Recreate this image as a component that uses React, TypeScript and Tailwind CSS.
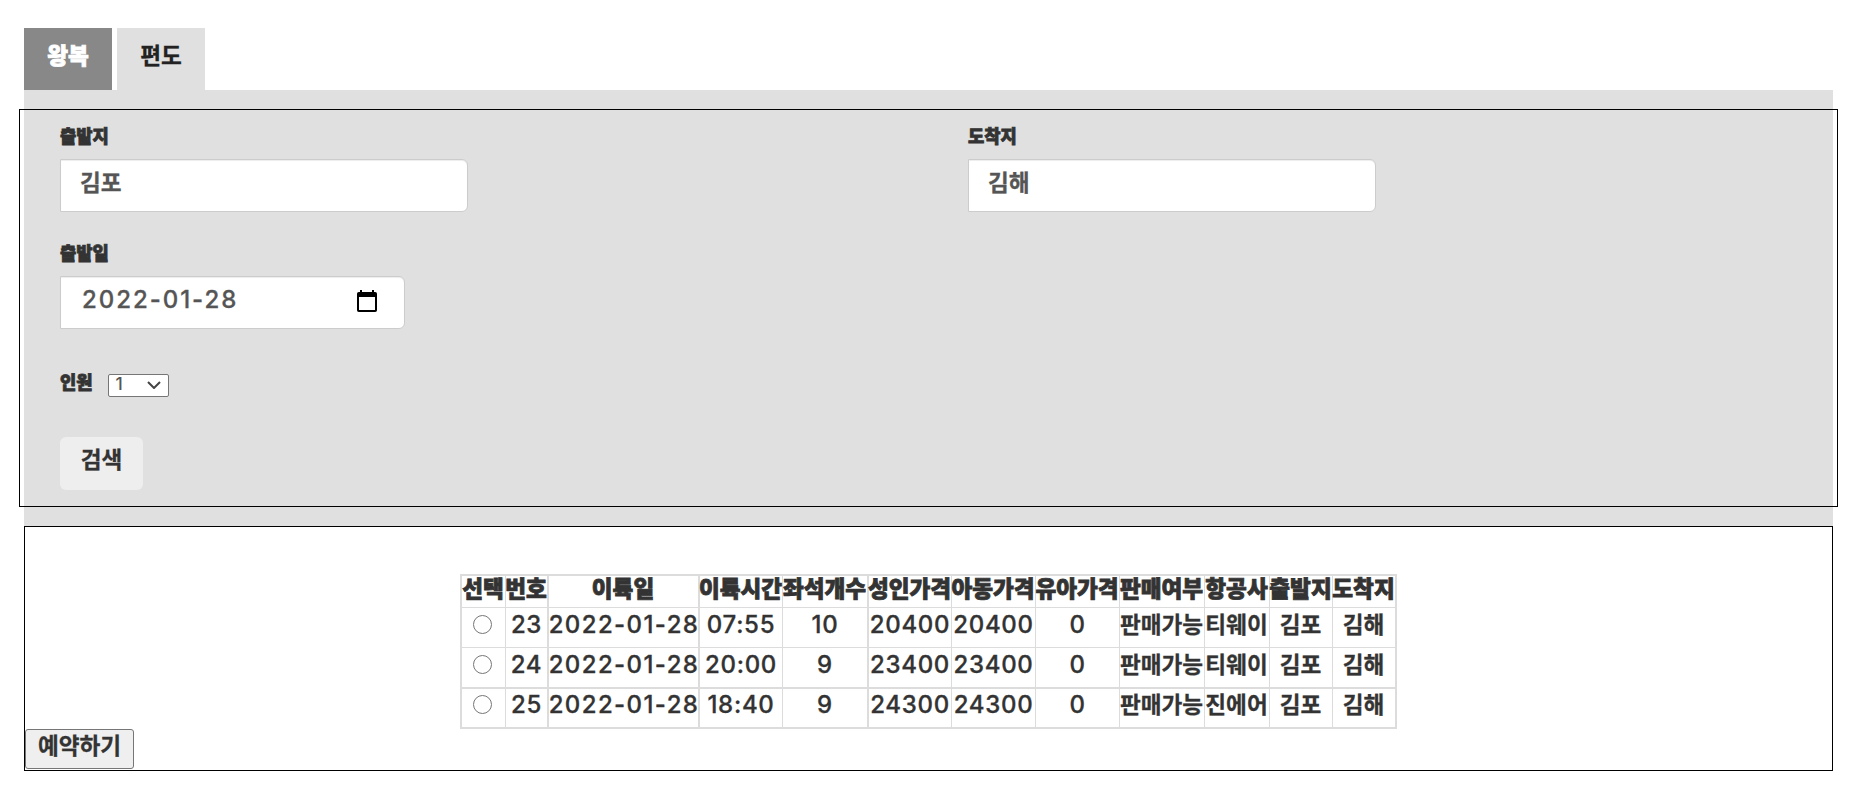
import type { ReactNode } from 'react';

const fontKo = "font-['Noto_Sans_CJK_KR',sans-serif]";
const fontNum = "font-['Inter','Noto_Sans_CJK_KR',sans-serif]";
const heavy = 'font-black [-webkit-text-stroke:0.8px_currentColor]';

const columns = [
  { label: '선택', cell: 'w-[44px] border-r' },
  { label: '번호', cell: 'w-[43px] border-r-2' },
  { label: '이륙일', cell: 'w-[151px] border-r-2' },
  { label: '이륙시간', cell: 'w-[83px] border-r' },
  { label: '좌석개수', cell: 'w-[86px] border-r-2' },
  { label: '성인가격', cell: 'w-[83px] border-r' },
  { label: '아동가격', cell: 'w-[84px] border-r' },
  { label: '유아가격', cell: 'w-[84px] border-r' },
  { label: '판매여부', cell: 'w-[85px] border-r' },
  { label: '항공사', cell: 'w-[65px] border-r' },
  { label: '출발지', cell: 'w-[63px] border-r' },
  { label: '도착지', cell: 'w-[64px] border-r-2' },
];

const flights = [
  { height: 'h-[40px] border-b', values: ['23', '2022-01-28', '07:55', '10', '20400', '20400', '0', '판매가능', '티웨이', '김포', '김해'] },
  { height: 'h-[41px] border-b-2', values: ['24', '2022-01-28', '20:00', '9', '23400', '23400', '0', '판매가능', '티웨이', '김포', '김해'] },
  { height: 'h-[40px] border-b-2', values: ['25', '2022-01-28', '18:40', '9', '24300', '24300', '0', '판매가능', '진에어', '김포', '김해'] },
];

function cellText(value: string) {
  if (value.includes('-')) return `${fontNum} -mx-[4px] pl-[1px] text-[24px] tracking-[1.4px] font-medium [-webkit-text-stroke:0.3px_currentColor]`;
  if (/\d/.test(value)) return `${fontNum} -mx-[4px] text-[24px] tracking-[0.7px] font-medium [-webkit-text-stroke:0.3px_currentColor]`;
  return '-mx-[4px] -mt-px pr-px [-webkit-text-stroke:0.3px_currentColor]';
}

function Label({ children }: { children: ReactNode }) {
  return (
    <label className={`${fontKo} ${heavy} block h-[23px] whitespace-nowrap text-[17.7px] leading-[21px] text-[#333]`}>
      {children}
    </label>
  );
}

function Field({ value, className = '', children }: { value: string; className?: string; children?: ReactNode }) {
  return (
    <div
      className={`flex h-[53px] items-center justify-between rounded-r-[6px] border border-[#ccc] bg-white text-[#555] shadow-[inset_0_1px_1px_rgba(0,0,0,0.075)] [-webkit-text-stroke:0.3px_currentColor] ${className}`}
    >
      <span>{value}</span>
      {children}
    </div>
  );
}

function CalendarIcon() {
  return (
    <svg width="20" height="22" viewBox="0 0 20 22" className="mt-[1px] mr-[27px]">
      <path
        fill="#000"
        fillRule="evenodd"
        d="M3 0h2v2h10V0h2v2h1.2A1.8 1.8 0 0 1 20 3.800V20.200A1.800 1.800 0 0 1 18.200 22H1.800A1.800 1.800 0 0 1 0 20.200V3.800A1.800 1.800 0 0 1 1.800 2H3zM2 7v13h16V7z"
      />
    </svg>
  );
}

export default function App() {
  return (
    <div className={`${fontKo} h-[792px] w-[1855px] bg-white pt-[28px] pl-[24px] text-[22.6px] leading-[30px] font-bold text-[#333]`}>
      <nav className="flex h-[62px] gap-[5px]">
        <button className={`h-[62px] w-[88px] bg-[#888] pb-[8px] text-white ${heavy}`}>왕복</button>
        <button className="h-[62px] w-[88px] bg-[#e0e0e0] pb-[8px] text-[#222] [-webkit-text-stroke:0.3px_currentColor]">편도</button>
      </nav>

      <div className="h-[436px] w-[1809px] bg-[#e0e0e0] pt-[19px]">
        <form className="-mx-[5px] flex h-[398px] flex-col border border-black pt-[15px] pl-[40px]">
          <div className="flex">
            <div className="w-[908px]">
              <Label>출발지</Label>
              <Field value="김포" className="mt-[11px] w-[408px] pb-[7px] pl-[19px]" />
            </div>
            <div>
              <Label>도착지</Label>
              <Field value="김해" className="mt-[11px] w-[408px] pb-[7px] pl-[19px]" />
            </div>
          </div>

          <div className="mt-[30px]">
            <Label>출발일</Label>
            <Field value="2022-01-28" className={`${fontNum} mt-[11px] w-[345px] pb-[5px] pl-[21px] text-[24px] tracking-[1.95px] font-medium`}>
              <CalendarIcon />
            </Field>
          </div>

          <div className="mt-[42px] flex h-[26px]">
            <Label>인원</Label>
            <div className={`${fontNum} ml-[15px] mt-[3px] flex h-[23px] w-[61px] items-center justify-between rounded-[2px] border border-[#767676] bg-white pr-[7px] pb-[3px] pl-[7px] text-[17.500px] font-medium text-[#555]`}>
              <span>1</span>
              <svg width="14" height="8" viewBox="0 0 14 8" className="mt-[2px]" fill="none" stroke="#444" strokeWidth="2">
                <path d="M1 1l6 6 6-6" />
              </svg>
            </div>
          </div>

          <button type="button" className="mt-[40px] h-[53px] w-[83px] rounded-[6px] bg-[#eee] pb-[10px] [-webkit-text-stroke:0.3px_currentColor]">
            검색
          </button>
        </form>
      </div>

      <section className="flex h-[245px] w-[1809px] flex-col border border-black">
        <table className="mt-[47px] ml-[435px] w-[937px] table-fixed border-separate border-spacing-0 border-t-2 border-l-2 border-[#dcdcdc] text-center whitespace-nowrap">
          <thead>
            <tr>
              {columns.map((c) => (
                <th key={c.label} className={`${c.cell} h-[32px] border-b border-[#dcdcdc] p-0 ${heavy}`}>
                  <div className="-mx-[4px] h-[31px] pr-px leading-[24px]">{c.label}</div>
                </th>
              ))}
            </tr>
          </thead>
          <tbody>
            {flights.map((f, row) => (
              <tr key={f.values[0]}>
                <td className={`${columns[0].cell} ${f.height} border-[#dcdcdc] p-0 align-top`}>
                  <input
                    type="radio"
                    name="flight"
                    className={`${row === 2 ? 'mt-[6px]' : 'mt-[7px]'} ml-[11px] block size-[19px] appearance-none rounded-full border border-[#767676] bg-white`}
                  />
                </td>
                {f.values.map((v, i) => (
                  <td key={i} className={`${columns[i + 1].cell} ${f.height} ${row === 2 ? 'pt-px' : 'pt-[2px]'} border-[#dcdcdc] px-0 pb-0 align-top`}>
                    <div className={cellText(v)}>{v}</div>
                  </td>
                ))}
              </tr>
            ))}
          </tbody>
        </table>
        <button className="h-[40px] w-[109px] rounded-[3px] border border-[#767676] bg-[#efefef] pb-[9px] [-webkit-text-stroke:0.3px_currentColor]">
          예약하기
        </button>
      </section>
    </div>
  );
}
